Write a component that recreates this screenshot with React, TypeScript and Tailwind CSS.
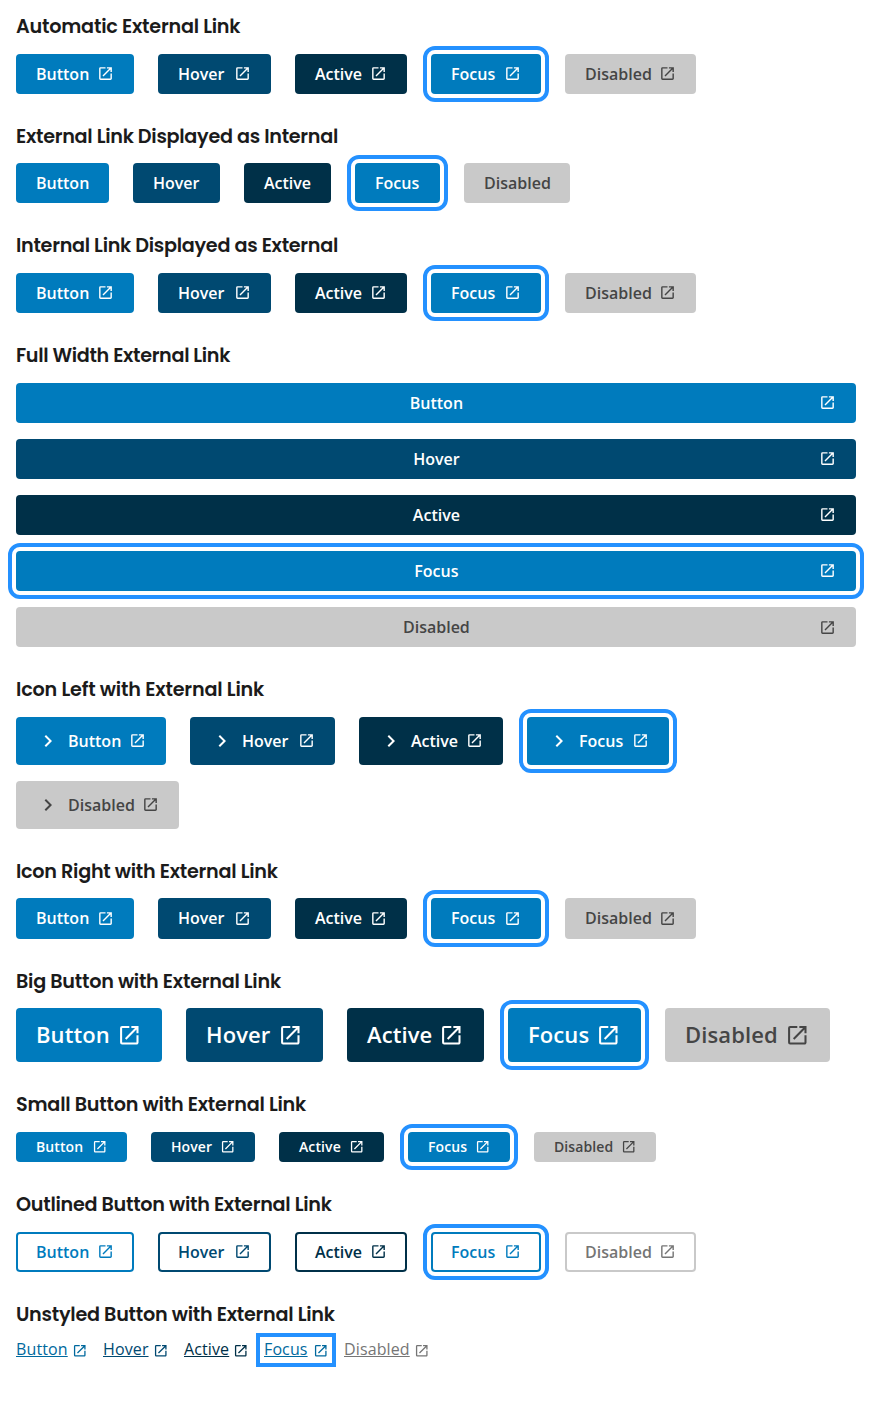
import React from "react";

type State = "Button" | "Hover" | "Active" | "Focus" | "Disabled";
const STATES: State[] = ["Button", "Hover", "Active", "Focus", "Disabled"];

const FILLED: Record<State, string> = {
  Button: "bg-[#007bbd] text-white",
  Hover: "bg-[#004971] text-white",
  Active: "bg-[#003048] text-white",
  Focus: "bg-[#007bbd] text-white outline-4 outline-offset-4 outline-[#2491ff]",
  Disabled: "bg-[#c9c9c9] text-[#454545]",
};

const OUTLINED: Record<State, string> = {
  Button: "border-2 border-[#007bbd] text-[#007bbd]",
  Hover: "border-2 border-[#004971] text-[#004971]",
  Active: "border-2 border-[#003048] text-[#003048]",
  Focus: "border-2 border-[#007bbd] text-[#007bbd] outline-4 outline-offset-4 outline-[#2491ff]",
  Disabled: "border-2 border-[#c9c9c9] text-[#757575]",
};

const LINK: Record<State, string> = {
  Button: "w-[71px] text-[#00699e]",
  Hover: "w-[65px] text-[#004971]",
  Active: "w-[64px] text-[#003048]",
  Focus: "w-[64px] text-[#00699e] outline-4 outline-offset-4 outline-[#2491ff]",
  Disabled: "w-[85px] text-[#757575]",
};

const WIDTHS: Record<string, Record<State, string>> = {
  plain: { Button: "w-[93px]", Hover: "w-[87px]", Active: "w-[87px]", Focus: "w-[85px]", Disabled: "w-[106px]" },
  base: { Button: "w-[118px]", Hover: "w-[113px]", Active: "w-[112px]", Focus: "w-[110px]", Disabled: "w-[131px]" },
  tall: { Button: "w-[150px]", Hover: "w-[145px]", Active: "w-[144px]", Focus: "w-[142px]", Disabled: "w-[163px]" },
  big: { Button: "w-[146px]", Hover: "w-[137px]", Active: "w-[137px]", Focus: "w-[133px]", Disabled: "w-[165px]" },
  small: { Button: "w-[111px]", Hover: "w-[104px]", Active: "w-[105px]", Focus: "w-[102px]", Disabled: "w-[122px]" },
};

function Launch({ className }: { className: string }) {
  return (
    <svg viewBox="0 0 24 24" fill="currentColor" className={`shrink-0 ${className}`}>
      <path d="M19 19H5V5h7V3H5a2 2 0 0 0-2 2v14a2 2 0 0 0 2 2h14c1.1 0 2-.9 2-2v-7h-2v7zM14 3v2h3.59l-9.83 9.83 1.41 1.41L19 6.41V10h2V3h-7z" />
    </svg>
  );
}

function Chevron() {
  return (
    <svg viewBox="0 0 24 24" fill="currentColor" className="mr-2 size-6 shrink-0">
      <path d="M10 6 8.59 7.41 13.17 12l-4.58 4.59L10 18l6-6z" />
    </svg>
  );
}

interface SectionProps {
  title: string;
  tracking?: string;
  tight?: boolean;
  children: React.ReactNode;
}

function Section({ title, tracking = "tracking-[-0.22px]", tight = false, children }: SectionProps) {
  return (
    <section className="mb-7">
      <h2
        className={`flex h-[30px] items-center whitespace-nowrap font-['Poppins','Inter',sans-serif] text-[19.2px] font-semibold text-[#1b1b1b] ${tracking} ${tight ? "mb-[11px]" : "mb-3"}`}
      >
        {title}
      </h2>
      {children}
    </section>
  );
}

const SIZES = {
  small: { box: "h-[30px] text-[14px] tracking-[0.1px]", label: "pb-0.5", icon: "size-[15.4px]" },
  base: { box: "h-10 text-[16px]", label: "", icon: "mb-px -mr-[0.2px] size-[17px]" },
  tall: { box: "h-12 text-[16px]", label: "", icon: "mb-px -mr-[0.2px] size-[17px]" },
  big: { box: "h-[54px] text-[22px] tracking-[0.1px]", label: "pb-0.5", icon: "size-[24.6px]" },
};

interface RowProps {
  size?: keyof typeof SIZES;
  theme?: Record<State, string>;
  external?: boolean;
  chevron?: boolean;
  className?: string;
}

function Row({ size = "base", theme = FILLED, external = true, chevron = false, className = "" }: RowProps) {
  const s = SIZES[size];
  const pad = theme === OUTLINED ? "px-[18px]" : "px-5";
  const widths = WIDTHS[external ? size : "plain"];
  return (
    <div className={`flex flex-wrap gap-x-6 gap-y-4 ${className}`}>
      {STATES.map((state) => (
        <button
          key={state}
          className={`flex items-center rounded-[4px] font-semibold ${pad} ${s.box} ${widths[state]} ${theme[state]}`}
        >
          {chevron && <Chevron />}
          <span className={s.label}>{state}</span>
          {external && <Launch className={`ml-auto ${s.icon}`} />}
        </button>
      ))}
    </div>
  );
}

export default function App() {
  return (
    <main className="min-h-[1407px] bg-white pt-3 pr-6 pl-4 font-['Open_Sans','Noto_Sans',sans-serif]">
      <Section title="Automatic External Link"><Row /></Section>
      <Section title="External Link Displayed as Internal" tracking="tracking-[-0.28px]" tight><Row external={false} /></Section>
      <Section title="Internal Link Displayed as External" tracking="tracking-[-0.28px]"><Row /></Section>
      <Section title="Full Width External Link" tracking="tracking-[-0.33px]">
        <div className="flex flex-col gap-4">
          {STATES.map((state) => (
            <button
              key={state}
              className={`grid h-10 w-full grid-cols-[1fr_auto_1fr] items-center rounded-[4px] pr-[19.8px] pl-[20.6px] text-[16px] font-semibold ${FILLED[state]}`}
            >
              <span />
              <span>{state}</span>
              <Launch className={`size-[17px] justify-self-end ${state === "Disabled" ? "mt-px" : "mb-px"}`} />
            </button>
          ))}
        </div>
      </Section>
      <Section title="Icon Left with External Link" tracking="tracking-[-0.18px]"><Row size="tall" chevron className="pr-2" /></Section>
      <Section title="Icon Right with External Link" tracking="tracking-[-0.26px]" tight>
        <Row className="[&_span]:pb-px [&_svg]:mt-px [&>button]:h-[41px]" />
      </Section>
      <Section title="Big Button with External Link" tracking="tracking-[-0.25px]" tight><Row size="big" /></Section>
      <Section title="Small Button with External Link"><Row size="small" /></Section>
      <Section title="Outlined Button with External Link" tracking="tracking-[-0.27px]"><Row theme={OUTLINED} /></Section>
      <Section title="Unstyled Button with External Link" tracking="tracking-[-0.25px]" tight>
        <div className="flex gap-4">
          {STATES.map((state) => (
            <a key={state} className={`flex h-[18px] items-center text-[16px] tracking-[0.12px] ${LINK[state]}`}>
              <span className="-mt-0.5 underline">{state}</span>
              <Launch className="mt-[1px] ml-auto size-[15.5px]" />
            </a>
          ))}
        </div>
      </Section>
    </main>
  );
}
